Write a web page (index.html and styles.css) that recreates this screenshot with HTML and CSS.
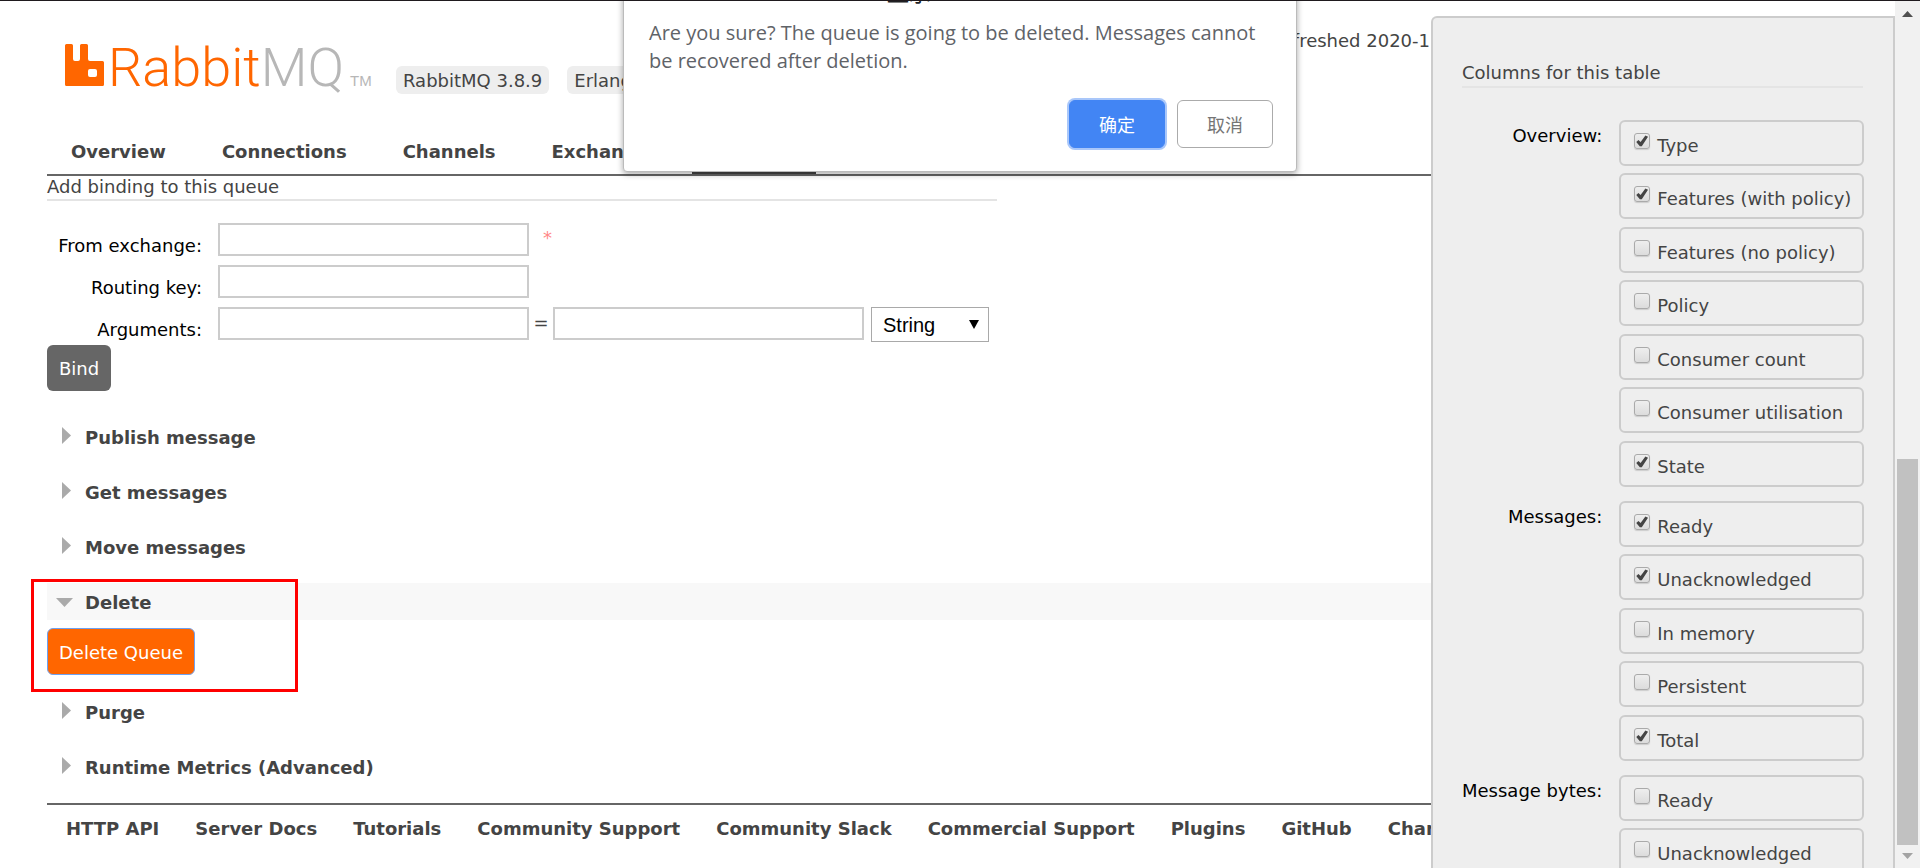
FILE: index.html
```html
<!DOCTYPE html>
<html lang="en">
<head>
<meta charset="utf-8">
<title>RabbitMQ Management</title>
<link rel="stylesheet" href="styles.css">
</head>
<body>
<main class="page">
  <header class="header">
    <svg class="logo" width="312" height="52" viewBox="0 0 312 52" role="img" aria-label="RabbitMQ">
      <path fill="#f60" fill-rule="evenodd" d="M2 2h4.500q1.500 0 1.500 1.500V17q0 2 2 2h3q2 0 2-2V3.500q0-1.500 1.500-1.500h5q1.500 0 1.500 1.500V17q0 2 2 2h12.500q1.500 0 1.500 1.500V42.500q0 1.500-1.500 1.500H1.500Q0 44 0 42.500V3.500Q0 2 1.500 2ZM25 27q-2 0-2 2v4q0 2 2 2h5q2 0 2-2v-4q0-2-2-2Z"/>
      <text class="logo-name" x="43" y="44" fill="#f60">Rabbit<tspan class="logo-mq">MQ</tspan></text>
      <text class="logo-tm" x="285" y="44">TM</text>
    </svg>
    <span class="badge">RabbitMQ 3.8.9</span>
    <span class="badge">Erlang 23.1</span>
    <span class="status">Refreshed 2020-1</span>
  </header>

  <nav class="tabs">
    <a class="tab" href="#overview">Overview</a>
    <a class="tab" href="#connections">Connections</a>
    <a class="tab" href="#channels">Channels</a>
    <a class="tab" href="#exchanges">Exchanges</a>
    <a class="tab tab-active" href="#queues">Queues</a>
    <a class="tab" href="#admin">Admin</a>
  </nav>

  <div class="content">
    <h3 class="subhead">Add binding to this queue</h3>
    <form class="binding">
      <label class="field-label" for="exchange">From exchange:</label>
      <div class="field"><input class="text" id="exchange" type="text"><span class="required">*</span></div>
      <label class="field-label" for="routing">Routing key:</label>
      <div class="field"><input class="text" id="routing" type="text"></div>
      <label class="field-label" for="argument">Arguments:</label>
      <div class="field">
        <input class="text" id="argument" type="text"><span class="equals">=</span><input class="text" type="text" aria-label="Argument value">
        <span class="select-wrap"><select class="select" aria-label="Argument type"><option>String</option><option>Number</option></select></span>
      </div>
    </form>
    <button class="button" type="button">Bind</button>

    <div class="sections">
      <section><button class="section-head" type="button"><svg width="20" height="20"><path d="M7 1l9 8.500L7 18z"/></svg>Publish message</button></section>
      <section><button class="section-head" type="button"><svg width="20" height="20"><path d="M7 1l9 8.500L7 18z"/></svg>Get messages</button></section>
      <section><button class="section-head" type="button"><svg width="20" height="20"><path d="M7 1l9 8.500L7 18z"/></svg>Move messages</button></section>
      <section class="section-open">
        <button class="section-head section-head-open" type="button"><svg width="20" height="20"><path d="M1 7h17l-8.500 9z"/></svg>Delete</button>
        <button class="button button-danger" type="button">Delete Queue</button>
        <div class="marker"></div>
      </section>
      <section><button class="section-head" type="button"><svg width="20" height="20"><path d="M7 1l9 8.500L7 18z"/></svg>Purge</button></section>
      <section><button class="section-head" type="button"><svg width="20" height="20"><path d="M7 1l9 8.500L7 18z"/></svg>Runtime Metrics (Advanced)</button></section>
    </div>

    <footer class="footer">
      <a href="#api">HTTP API</a>
      <a href="#docs">Server Docs</a>
      <a href="#tutorials">Tutorials</a>
      <a href="#support">Community Support</a>
      <a href="#slack">Community Slack</a>
      <a href="#commercial">Commercial Support</a>
      <a href="#plugins">Plugins</a>
      <a href="#github">GitHub</a>
      <a href="#changelog">Changelog</a>
    </footer>
  </div>
</main>

<aside class="panel">
  <h3 class="panel-title">Columns for this table</h3>
  <div class="groups">
    <div class="group-name">Overview:</div>
    <div class="options">
      <label class="option"><input type="checkbox" checked><span>Type</span></label>
      <label class="option"><input type="checkbox" checked><span>Features (with policy)</span></label>
      <label class="option"><input type="checkbox"><span>Features (no policy)</span></label>
      <label class="option"><input type="checkbox"><span>Policy</span></label>
      <label class="option"><input type="checkbox"><span>Consumer count</span></label>
      <label class="option"><input type="checkbox"><span>Consumer utilisation</span></label>
      <label class="option"><input type="checkbox" checked><span>State</span></label>
    </div>
    <div class="group-name">Messages:</div>
    <div class="options">
      <label class="option"><input type="checkbox" checked><span>Ready</span></label>
      <label class="option"><input type="checkbox" checked><span>Unacknowledged</span></label>
      <label class="option"><input type="checkbox"><span>In memory</span></label>
      <label class="option"><input type="checkbox"><span>Persistent</span></label>
      <label class="option"><input type="checkbox" checked><span>Total</span></label>
    </div>
    <div class="group-name">Message bytes:</div>
    <div class="options">
      <label class="option"><input type="checkbox"><span>Ready</span></label>
      <label class="option"><input type="checkbox"><span>Unacknowledged</span></label>
    </div>
  </div>
</aside>

<div class="scrollbar" aria-hidden="true">
  <svg width="25" height="25"><path fill="#505050" d="M7 16h11l-5.500-6z"/></svg>
  <div class="track-above"></div>
  <div class="thumb"></div>
  <svg width="25" height="23"><path fill="#a3a3a3" d="M7 8h11l-5.500 6z"/></svg>
</div>

<div class="dialog" role="dialog" aria-label="Confirm">
  <div class="dialog-title">显示</div>
  <p class="dialog-text">Are you sure? The queue is going to be deleted. Messages cannot be recovered after deletion.</p>
  <div class="dialog-actions">
    <button class="dialog-button dialog-ok" type="button">确定</button>
    <button class="dialog-button" type="button">取消</button>
  </div>
</div>
</body>
</html>
```

FILE: styles.css
```css
* { box-sizing: border-box; }

body {
  position: relative;
  display: flex;
  height: 100vh;
  margin: 0;
  overflow: hidden;
  border-top: 1px solid #1f1a1e;
  background: #fff;
  color: #444;
  font: 18px/24px "DejaVu Sans", sans-serif;
}

button, input, select { font: inherit; color: inherit; }
a { color: inherit; text-decoration: none; }

.page {
  flex: 1;
  min-width: 0;
  padding-left: 47px;
  overflow: hidden;
}

/* Header */
.header {
  display: flex;
  align-items: flex-end;
  min-height: 93px;
  padding: 28px 1px 0 18px;
  white-space: nowrap;
}
.logo { flex: none; margin-right: 19px; overflow: visible; }
.logo-name { font: 300 54px Roboto, sans-serif; }
.logo-mq { fill: #b7b7b7; }
.logo-tm { font: 15px "Liberation Sans", sans-serif; fill: #b7b7b7; }
.badge {
  margin-right: 18px;
  padding: 3px 7px 1px;
  border-radius: 6px;
  background: #eee;
}
.status { align-self: flex-start; margin-left: auto; }

/* Tabs */
.tabs {
  display: flex;
  gap: 8px;
  margin-top: 40px;
  border-bottom: 2px solid #666;
  font-weight: bold;
}
.tab { padding: 6px 24px 7px; border-bottom: 3px solid transparent; }
.tab-active { border-color: #444; }

/* Binding form */
.subhead {
  max-width: 950px;
  margin: 0;
  padding-bottom: 2px;
  border-bottom: 2px solid #e4e4e4;
  font-size: 18px;
  font-weight: normal;
  line-height: 21px;
}
.binding {
  display: grid;
  grid-template-columns: 155px 1fr;
  gap: 8px 16px;
  padding: 22px 0 3px;
}
.field-label {
  padding-top: 12px;
  color: #000;
  line-height: 22px;
  text-align: right;
}
.field { display: flex; align-items: flex-start; }
.text {
  width: 311px;
  height: 33px;
  border: 2px solid #ccc;
  background: #fff;
}
.required { margin-left: 14px; padding-top: 3px; color: #f88; }
.equals { width: 24px; padding-top: 4px; text-align: center; }
.select-wrap { position: relative; margin-left: 7px; }
.select-wrap::after {
  content: "";
  position: absolute;
  top: 13px;
  right: 10px;
  width: 10px;
  height: 9px;
  background: #000;
  clip-path: polygon(0 0, 100% 0, 50% 100%);
  pointer-events: none;
}
.select {
  appearance: none;
  display: block;
  width: 118px;
  height: 35px;
  padding: 0 11px;
  border: 1px solid #a9a9a9;
  border-radius: 0;
  background: #fff;
  color: #000;
  font: 20px "Liberation Sans", sans-serif;
}
.button {
  display: block;
  padding: 12px 12px 10px;
  border: 0;
  border-radius: 6px;
  background: #666;
  color: #fff;
}

/* Collapsible sections */
.sections {
  display: flex;
  flex-direction: column;
  gap: 18px;
  margin: 27px 0 18px;
}
.section-head {
  display: flex;
  gap: 10px;
  width: 100%;
  padding: 8px 8px 5px;
  border: 0;
  background: none;
  font-weight: bold;
  line-height: 24px;
  text-align: left;
}
.section-head svg { fill: #aaa; }
.section-head-open { background: #f8f8f8; }
.section-open { position: relative; }
.button-danger {
  margin: 8px 0 0;
  padding: 12px 11px 9px;
  border: 1px solid #6ea1f1;
  background: #f60;
}
.marker {
  position: absolute;
  top: -4px;
  left: -16px;
  width: 267px;
  height: 113px;
  border: 3px solid #f00;
  pointer-events: none;
}

.footer {
  display: flex;
  gap: 36px;
  padding: 12px 19px;
  border-top: 2px solid #666;
  font-weight: bold;
  white-space: nowrap;
}

/* Column picker */
.panel {
  flex: 0 0 464px;
  margin-top: 15px;
  padding: 43px 30px 0 29px;
  border: 2px solid #ccc;
  border-bottom: 0;
  border-radius: 6px 0 0 0;
  background: #eee;
  overflow: hidden;
}
.panel-title {
  margin: 0 0 32px;
  padding-bottom: 2px;
  border-bottom: 2px solid #e4e4e4;
  font-size: 18px;
  font-weight: normal;
  line-height: 23px;
}
.groups {
  display: grid;
  grid-template-columns: 1fr 245px;
  gap: 14px 17px;
}
.group-name {
  padding-top: 4px;
  color: #000;
  text-align: right;
  white-space: nowrap;
}
.option {
  display: flex;
  align-items: flex-start;
  gap: 7px;
  margin-bottom: 7px;
  padding: 11px 6px 6px 13px;
  border: 2px solid #ccc;
  border-radius: 6px;
  white-space: nowrap;
}
.option:nth-child(even) { margin-bottom: 8px; }
.option:last-child { margin-bottom: 0; }
.option span { padding-top: 1px; }
.option input {
  appearance: none;
  flex: none;
  width: 16px;
  height: 16px;
  margin: 0;
  border: 1px solid #aaa;
  border-radius: 3px;
  background: linear-gradient(#eee, #dcdcdc);
  box-shadow: 0 1px 1px #ccc;
}
.option input:checked::before {
  content: "";
  display: block;
  width: 12px;
  height: 12px;
  margin: 1px;
  background: #444;
  clip-path: polygon(0 58%, 18% 42%, 36% 58%, 76% 4%, 98% 14%, 46% 94%, 30% 94%);
}

/* Window scrollbar */
.scrollbar {
  display: flex;
  flex-direction: column;
  flex: 0 0 25px;
  background: #f1f1f1;
}
.track-above { flex: 434; }
.thumb { flex: 386; margin: 0 2px; background: #c1c1c1; }

/* Confirmation dialog */
.dialog {
  position: absolute;
  top: -31px;
  right: 0;
  left: 0;
  width: 674px;
  margin: 0 auto;
  padding: 0 23px 23px 25px;
  border: 1px solid #bbb;
  border-radius: 4px;
  background: #fff;
  box-shadow: 0 2px 6px rgba(0, 0, 0, .35);
  color: #5f6368;
}
.dialog-title {
  padding: 6px 0 0 238px;
  color: #202124;
  font: 22px/28px "Noto Sans CJK SC", sans-serif;
}
.dialog-text {
  margin: 14px 0 25px;
  font: 20px/28px "Open Sans", sans-serif;
}
.dialog-actions { display: flex; justify-content: flex-end; gap: 12px; }
.dialog-button {
  width: 96px;
  height: 48px;
  padding: 0;
  border: 1px solid #ababab;
  border-radius: 6px;
  background: #fff;
  color: #757575;
  font: 18px "Noto Sans CJK SC", sans-serif;
}
.dialog-ok {
  border-color: #4285f4;
  background: #4285f4;
  box-shadow: 0 0 0 2px #a9c7fa;
  color: #fff;
}
```
